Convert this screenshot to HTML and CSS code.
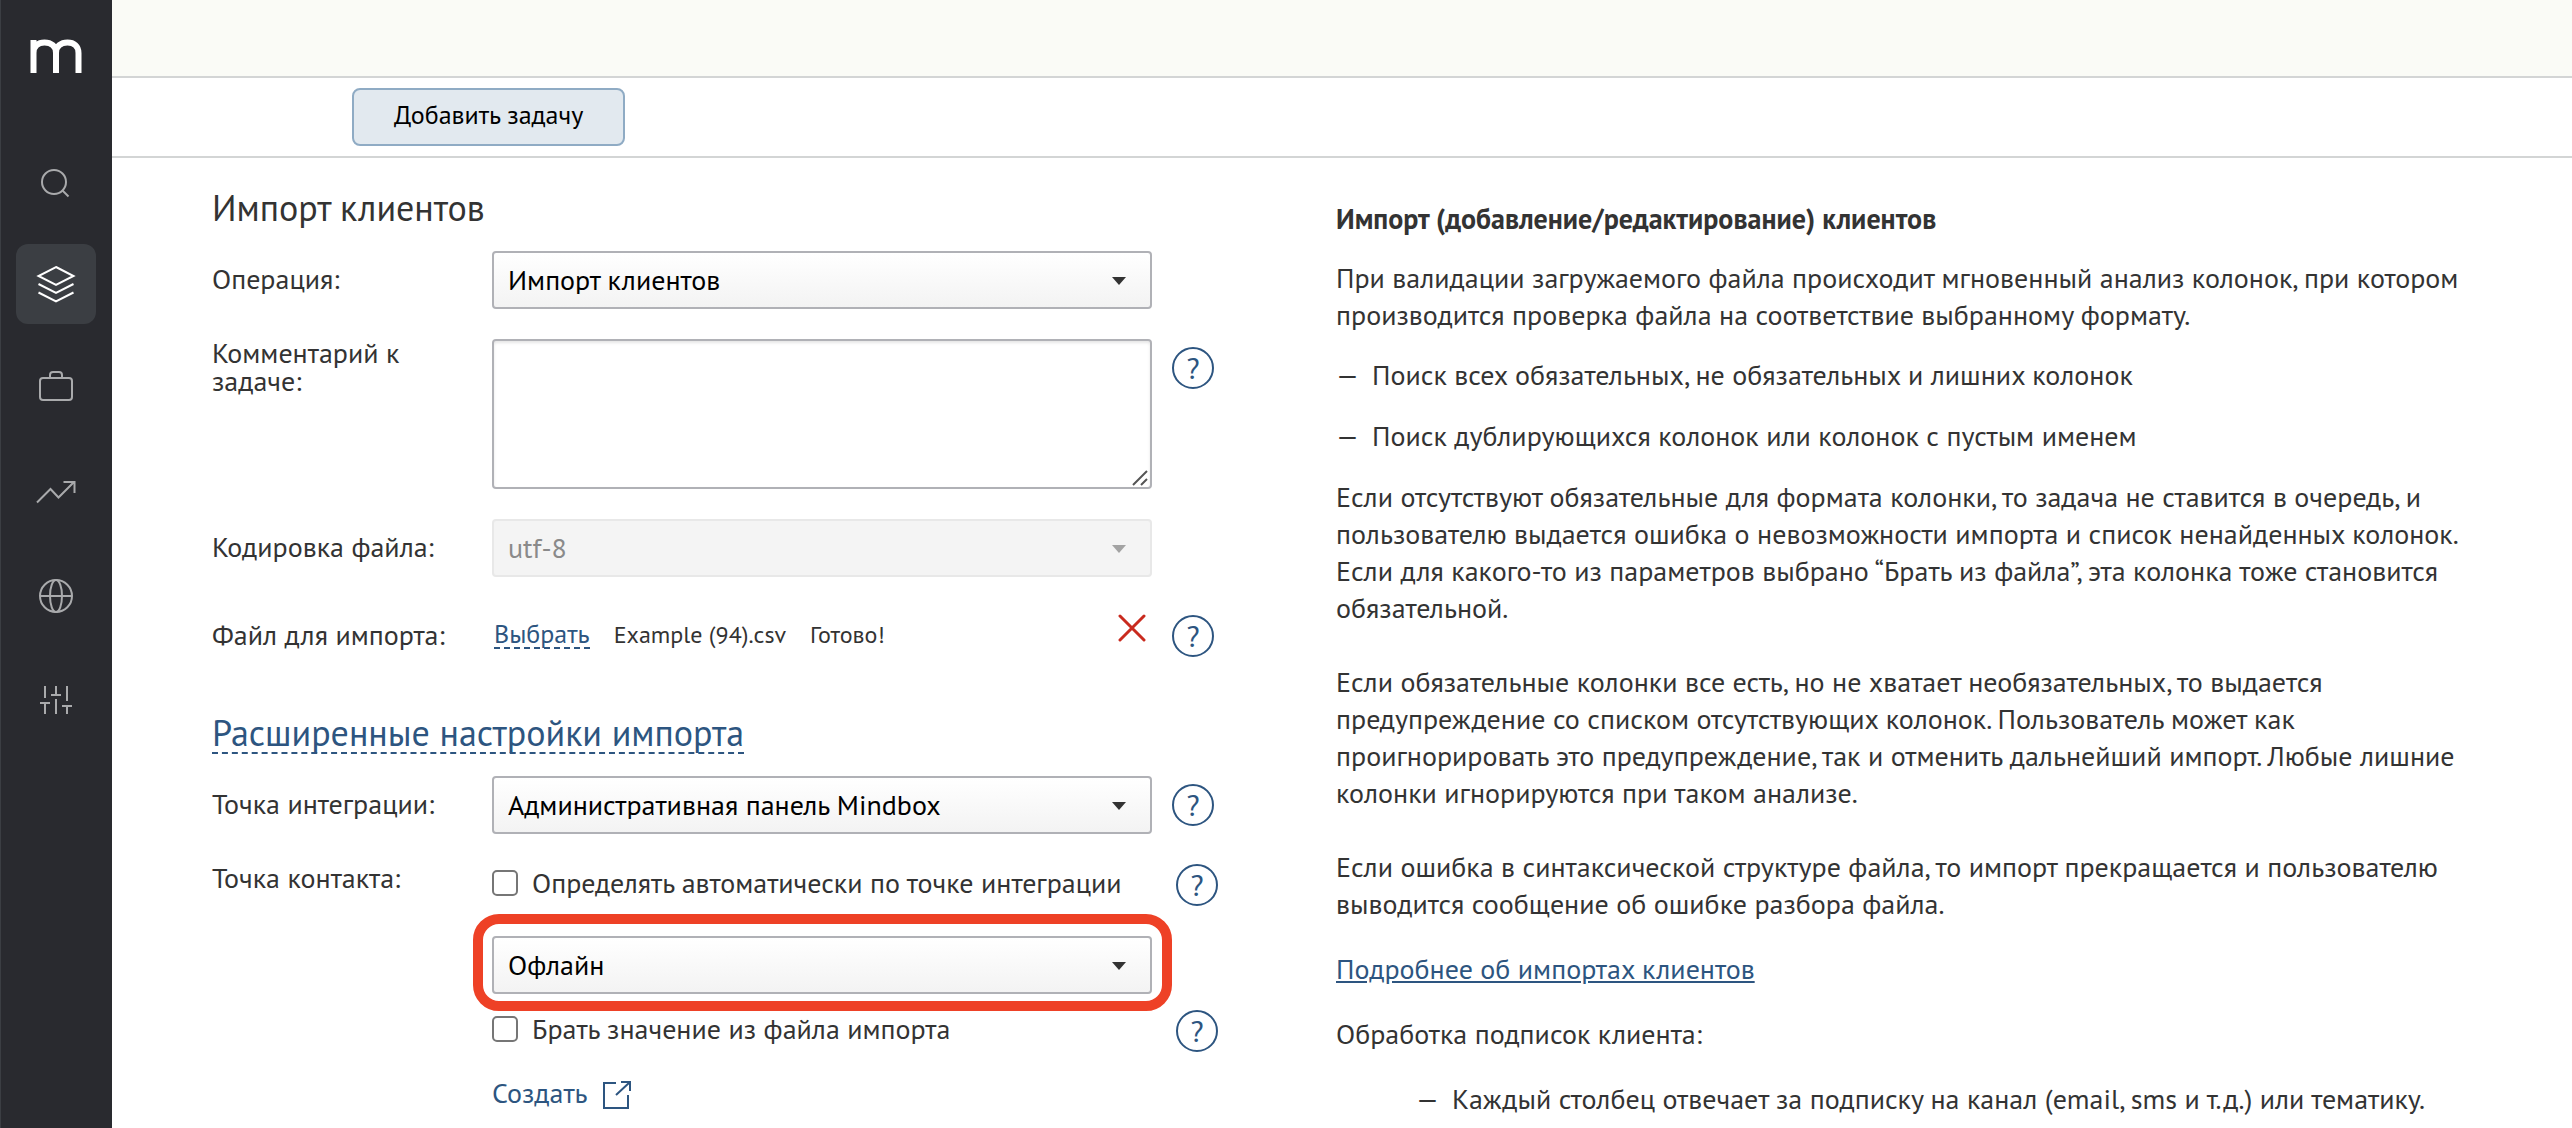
FILE: index.html
```
<!DOCTYPE html>
<html lang="ru">
<head>
<meta charset="utf-8">
<meta name="viewport" content="width=device-width, initial-scale=1">
<title>Импорт клиентов</title>
<link rel="stylesheet" href="styles.css">
</head>
<body>
<div class="app">
  <nav class="sidebar" aria-label="Разделы">
    <a class="logo" href="#" aria-label="Mindbox">
      <svg width="52" height="34" viewBox="0 0 52 34" fill="none" stroke="#fff" stroke-width="6"><path d="M3.500 34V1M3.500 14C3.500 7 8 3.500 14.500 3.500S26 7 26 14V34M26 14C26 7 31 3.500 37.500 3.500S48.500 7 48.500 14V34"/></svg>
    </a>
    <a class="nav-item" href="#" aria-label="Поиск">
      <svg width="40" height="40" viewBox="0 0 40 40"><circle cx="18" cy="22" r="12"/><path d="M26.500 30.500l6 6"/></svg>
    </a>
    <a class="nav-item nav-item-active" href="#" aria-label="Данные" aria-current="page">
      <svg width="40" height="40" viewBox="0 0 40 40"><path d="M20 3l17.500 9-17.500 9-17.500-9zM2.500 20l17.500 9 17.500-9M2.500 28.500l17.500 9 17.500-9"/></svg>
    </a>
    <a class="nav-item" href="#" aria-label="Кампании">
      <svg width="40" height="40" viewBox="0 0 40 40"><rect x="4" y="10" width="32" height="22" rx="3"/><path d="M14 10V7a3 3 0 0 1 3-3h6a3 3 0 0 1 3 3v3"/></svg>
    </a>
    <a class="nav-item" href="#" aria-label="Отчёты">
      <svg width="40" height="40" viewBox="0 0 40 40"><path d="M1 30.500l13.500-13.500 8 8.500L38 10M27.500 10h11v11"/></svg>
    </a>
    <a class="nav-item" href="#" aria-label="Интеграции">
      <svg width="40" height="40" viewBox="0 0 40 40"><circle cx="20" cy="20" r="16"/><ellipse cx="20" cy="20" rx="6" ry="16"/><path d="M4 20h32"/></svg>
    </a>
    <a class="nav-item" href="#" aria-label="Настройки">
      <svg width="40" height="40" viewBox="0 0 40 40"><path d="M9 6v12M4 23h10M9 23v11M20 6v8M15 15h10M20 19v15M31 6v15M26 26h10M31 26v8"/></svg>
    </a>
  </nav>
  <div class="page">
    <header class="topbar"></header>
    <div class="toolbar"><button class="primary" type="submit" form="import">Добавить задачу</button></div>
    <main class="content">
      <form class="form" id="import">
        <h1 class="heading">Импорт клиентов</h1>
        <div class="row">
          <label class="label" for="operation">Операция:</label>
          <div class="select"><select id="operation"><option>Импорт клиентов</option></select></div>
        </div>
        <div class="row">
          <label class="label label-top" for="comment">Комментарий к задаче:</label>
          <div class="comment">
            <textarea id="comment"></textarea>
            <svg class="grip" width="16" height="16" viewBox="0 0 16 16" fill="none" stroke="#555" stroke-width="2"><path d="M1 15L15 1M9 15l6-6"/></svg>
          </div>
          <button class="help" type="button" aria-label="Подсказка">?</button>
        </div>
        <div class="row">
          <label class="label" for="encoding">Кодировка файла:</label>
          <div class="select select-disabled"><select id="encoding" disabled><option>utf-8</option></select></div>
        </div>
        <div class="row">
          <span class="label">Файл для импорта:</span>
          <div class="file">
            <a class="dashed" href="#">Выбрать</a>
            <span>Example (94).csv</span>
            <span>Готово!</span>
            <button class="remove" type="button" aria-label="Удалить файл">
              <svg width="28" height="28" viewBox="0 0 28 28" fill="none" stroke="#c92a1e" stroke-width="3" stroke-linecap="round"><path d="M2 2l24 24M26 2L2 26"/></svg>
            </button>
          </div>
          <button class="help" type="button" aria-label="Подсказка">?</button>
        </div>
        <h2 class="heading heading-link"><a class="dashed" href="#">Расширенные настройки импорта</a></h2>
        <div class="row">
          <label class="label" for="integration">Точка интеграции:</label>
          <div class="select"><select id="integration"><option>Административная панель Mindbox</option></select></div>
          <button class="help" type="button" aria-label="Подсказка">?</button>
        </div>
        <div class="row">
          <label class="label label-top" for="contact">Точка контакта:</label>
          <div class="stack">
            <div class="option">
              <label class="check"><input type="checkbox">Определять автоматически по точке интеграции</label>
              <button class="help" type="button" aria-label="Подсказка">?</button>
            </div>
            <div class="select select-marked"><select id="contact"><option>Офлайн</option></select></div>
            <div class="option">
              <label class="check"><input type="checkbox">Брать значение из файла импорта</label>
              <button class="help" type="button" aria-label="Подсказка">?</button>
            </div>
            <a class="create" href="#">Создать
              <svg width="30" height="30" viewBox="0 0 30 30" fill="none" stroke="#2d5580" stroke-width="2"><path d="M14 4H2v25h24V16M14 16L28 3M19 3h9v9"/></svg>
            </a>
          </div>
        </div>
      </form>
      <article class="info">
        <h3>Импорт (добавление/редактирование) клиентов</h3>
        <p>При валидации загружаемого файла происходит мгновенный анализ колонок, при котором производится проверка файла на соответствие выбранному формату.</p>
        <ul>
          <li>Поиск всех обязательных, не обязательных и лишних колонок</li>
          <li>Поиск дублирующихся колонок или колонок с пустым именем</li>
        </ul>
        <p class="wide">Если отсутствуют обязательные для формата колонки, то задача не ставится в очередь, и пользователю выдается ошибка о невозможности импорта и список ненайденных колонок. Если для какого-то из параметров выбрано “Брать из файла”, эта колонка тоже становится обязательной.</p>
        <p class="wide">Если обязательные колонки все есть, но не хватает необязательных, то выдается предупреждение со списком отсутствующих колонок. Пользователь может как проигнорировать это предупреждение, так и отменить дальнейший импорт. Любые лишние колонки игнорируются при таком анализе.</p>
        <p class="loose">Если ошибка в синтаксической структуре файла, то импорт прекращается и пользователю выводится сообщение об ошибке разбора файла.</p>
        <p class="loose"><a href="#">Подробнее об импортах клиентов</a></p>
        <p class="loose">Обработка подписок клиента:</p>
        <ul class="nested">
          <li>Каждый столбец отвечает за подписку на канал (email, sms и т.д.) или тематику.</li>
        </ul>
      </article>
    </main>
  </div>
</div>
</body>
</html>
```

FILE: styles.css
```
* {
  box-sizing: border-box;
}

body {
  margin: 0;
  background: #fff;
  color: #333;
  font: 28px/28px "PT Sans", "Noto Sans", sans-serif;
}

a {
  color: #2d5580;
}

button,
select,
textarea {
  font: inherit;
}

svg {
  display: block;
}

.app {
  display: flex;
  min-height: 100vh;
}

/* Sidebar */

.sidebar {
  display: flex;
  flex: none;
  flex-direction: column;
  align-items: center;
  gap: 24px;
  width: 112px;
  padding-top: 39px;
  background: #292a2f;
  box-shadow: inset 1px 0 #3b3e43;
}

.logo {
  margin-bottom: 43px;
}

.nav-item {
  display: grid;
  place-items: center;
  width: 80px;
  height: 80px;
  border-radius: 12px;
}

.nav-item svg {
  fill: none;
  stroke: #a9aaac;
  stroke-width: 2;
}

.nav-item-active {
  background: #3b3e43;
}

.nav-item-active svg {
  stroke: #fff;
}

/* Page frame */

.page {
  flex: 1;
  min-width: 0;
}

.topbar {
  height: 78px;
  border-bottom: 2px solid #d3d5d5;
  background: #fafbf6;
}

.toolbar {
  height: 80px;
  padding: 10px 0 0 240px;
  border-bottom: 2px solid #d3d5d5;
}

.primary {
  height: 58px;
  padding: 0 40px 4px;
  border: 2px solid #8fabc4;
  border-radius: 8px;
  background: #e2e9ef;
  color: #000;
  font-size: 26px;
}

.content {
  display: grid;
  grid-template-columns: minmax(0, 1124fr) minmax(0, 1236fr);
  padding-left: 100px;
}

/* Form */

.form {
  padding-top: 28px;
}

.heading {
  margin: 0 0 21px;
  font-size: 36px;
  font-weight: 400;
  line-height: 44px;
}

.heading-link {
  margin-top: 46px;
}

.row {
  display: grid;
  grid-template-columns: 280px minmax(0, 660px) auto;
  justify-content: start;
  min-height: 58px;
}

.row + .row {
  margin-top: 30px;
}

.label {
  padding: 14px 60px 0 0;
  white-space: nowrap;
}

.label-top {
  padding-top: 0;
  white-space: normal;
}

.select {
  position: relative;
}

.select select {
  display: block;
  width: 100%;
  height: 58px;
  padding: 0 50px 0 14px;
  border: 2px solid #b0b1b6;
  border-radius: 4px;
  appearance: none;
  background: linear-gradient(#fff, #f3f3f3);
  color: #000;
}

.select::after {
  content: "";
  position: absolute;
  top: 26px;
  right: 26px;
  width: 14px;
  height: 8px;
  background: #333;
  clip-path: polygon(0 0, 100% 0, 50% 100%);
  pointer-events: none;
}

.select-disabled select {
  border-color: #e8e8e8;
  background: #f4f4f4;
  color: #8a8a8a;
  opacity: 1;
}

.select-disabled::after {
  background: #a3a3a3;
}

.select-marked::before {
  content: "";
  position: absolute;
  inset: -22px -20px -17px -19px;
  border: 10px solid #ee4126;
  border-radius: 26px;
  pointer-events: none;
}

.comment {
  position: relative;
}

.comment textarea {
  display: block;
  width: 100%;
  height: 150px;
  padding: 12px 14px;
  border: 2px solid #b0b1b6;
  border-radius: 4px;
  background: #fff;
  box-shadow: inset 0 2px 3px #e6e6e6;
  resize: none;
}

.grip {
  position: absolute;
  right: 4px;
  bottom: 3px;
}

.help {
  width: 42px;
  height: 42px;
  margin: 8px 0 0 20px;
  padding: 0;
  border: 2px solid #2d5580;
  border-radius: 50%;
  background: none;
  color: #2d5580;
  font-size: 30px;
}

.file {
  display: flex;
  gap: 24px;
  padding: 14px 6px 0 2px;
  font-size: 24px;
}

.dashed {
  border-bottom: 2px dashed #2d5580;
  text-decoration: none;
}

.file .dashed {
  align-self: start;
  font-size: 26px;
  line-height: 26px;
}

.heading .dashed {
  display: inline-block;
  line-height: 38px;
}

.remove {
  align-self: start;
  margin: -7px 0 0 auto;
  padding: 0;
  border: 0;
  background: none;
}

.option {
  display: flex;
  justify-content: space-between;
  height: 42px;
  margin-right: -66px;
}

.option .help {
  margin-top: 0;
}

.check {
  display: flex;
  align-items: center;
  gap: 14px;
  height: 38px;
}

.check input {
  width: 26px;
  height: 26px;
  margin: 0;
  border: 2px solid #767676;
  border-radius: 5px;
  appearance: none;
  background: #fff;
}

.check input:checked {
  background: #2d5580;
}

.select-marked {
  margin: 30px 0 16px;
}

.create {
  display: inline-flex;
  gap: 14px;
  margin: 27px 0 19px;
  text-decoration: none;
}

/* Reference text */

.info {
  padding: 42px 100px 0 0;
  line-height: 37px;
}

.info h3 {
  margin: 0 0 22px;
  font-size: 28px;
}

.info p {
  margin: 0 0 23px;
}

.info .wide {
  margin-bottom: 37px;
}

.info .loose {
  margin-bottom: 28px;
}

.info ul {
  margin: 0;
  padding: 0;
  list-style: none;
}

.info li {
  display: flex;
  margin-bottom: 24px;
}

.info li::before {
  content: "—";
  flex: none;
  width: 36px;
}

.info .nested {
  padding-left: 80px;
}

.info .nested li {
  margin-bottom: 0;
}
```
